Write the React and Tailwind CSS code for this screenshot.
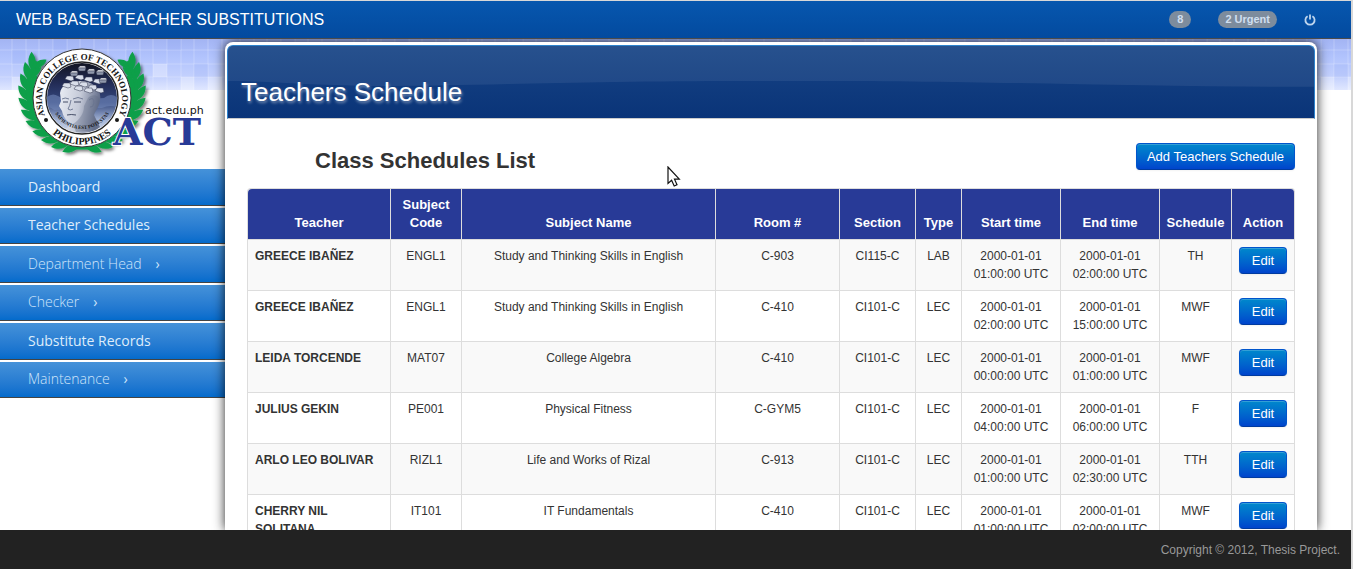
import React from "react";

const NAV = [
  { label: "Dashboard" },
  { label: "Teacher Schedules" },
  { label: "Department Head", sub: true },
  { label: "Checker", sub: true },
  { label: "Substitute Records" },
  { label: "Maintenance", sub: true },
];

const COLS = [
  ["Teacher", "w-[143px]"],
  ["Subject Code", "w-[71px]"],
  ["Subject Name", ""],
  ["Room #", "w-[124px]"],
  ["Section", "w-[76px]"],
  ["Type", "w-[46px]"],
  ["Start time", "w-[99px]"],
  ["End time", "w-[99px]"],
  ["Schedule", "w-[72px]"],
  ["Action", "w-[63px]"],
];

const ROWS = [
  ["GREECE IBAÑEZ", "ENGL1", "Study and Thinking Skills in English", "C-903", "CI115-C", "LAB", "2000-01-01 01:00:00 UTC", "2000-01-01 02:00:00 UTC", "TH"],
  ["GREECE IBAÑEZ", "ENGL1", "Study and Thinking Skills in English", "C-410", "CI101-C", "LEC", "2000-01-01 02:00:00 UTC", "2000-01-01 15:00:00 UTC", "MWF"],
  ["LEIDA TORCENDE", "MAT07", "College Algebra", "C-410", "CI101-C", "LEC", "2000-01-01 00:00:00 UTC", "2000-01-01 01:00:00 UTC", "MWF"],
  ["JULIUS GEKIN", "PE001", "Physical Fitness", "C-GYM5", "CI101-C", "LEC", "2000-01-01 04:00:00 UTC", "2000-01-01 06:00:00 UTC", "F"],
  ["ARLO LEO BOLIVAR", "RIZL1", "Life and Works of Rizal", "C-913", "CI101-C", "LEC", "2000-01-01 01:00:00 UTC", "2000-01-01 02:30:00 UTC", "TTH"],
  ["CHERRY NIL SOLITANA", "IT101", "IT Fundamentals", "C-410", "CI101-C", "LEC", "2000-01-01 01:00:00 UTC", "2000-01-01 02:00:00 UTC", "MWF"],
];

const BLUE_BUTTON =
  "rounded border border-[#0055cc] border-b-[#003ba0] bg-linear-to-b from-[#0088cc] to-[#0044cc] text-[13px] leading-[17px] text-white shadow-[inset_0_1px_0_rgba(255,255,255,0.2),0_1px_2px_rgba(0,0,0,0.05)]";

/* Leaf positions along both sides of the laurel wreath, in degrees. */
const LEAVES = [8, 19, 30, 41, 52, 63, 74, 85, 96, 107, 118];

function Logo() {
  return (
    <svg viewBox="0 0 196 110" className="block h-[110px] w-[196px]" role="img" aria-label="Asian College of Technology">
      <defs>
        <path id="ring-top" d="M32.4 70 A40 40 0 1 1 103.6 70" />
        <path id="ring-bottom" d="M23 60 A46 46 0 0 0 113 60" />
        <path id="motto" d="M39 61 A31 31 0 0 0 97 61" />
        <linearGradient id="sky" x1="0" y1="0" x2="0" y2="1">
          <stop offset="0" stopColor="#11131f" />
          <stop offset="0.3" stopColor="#232d58" />
          <stop offset="0.55" stopColor="#35497f" />
          <stop offset="0.8" stopColor="#a9b9d9" />
          <stop offset="1" stopColor="#d3dbea" />
        </linearGradient>
        <linearGradient id="face" x1="0" y1="0" x2="1" y2="0.2">
          <stop offset="0" stopColor="#eceff6" />
          <stop offset="0.55" stopColor="#c5cad8" />
          <stop offset="1" stopColor="#66708c" />
        </linearGradient>
        <clipPath id="disc"><circle cx="68" cy="50" r="35" /></clipPath>
        <filter id="logo-shadow" x="-10%" y="-10%" width="125%" height="125%">
          <feDropShadow dx="2" dy="2" stdDeviation="1.5" floodColor="#000" floodOpacity="0.5" />
        </filter>
      </defs>
      <g filter="url(#logo-shadow)">
        <g fill="#0c9f48">
          {[1, -1].map((side) =>
            LEAVES.map((a) => (
              <g key={side + "-" + a} transform={`translate(68 43) scale(${side} 1) rotate(${a})`}>
                <path d="M5 54 C3 60 -3 64 -11 63 C-8 56 -3 52 5 54 Z" />
                <path d="M5 54 C-1 47 -6 45 -11 46 C-9 52 -4 56 5 54 Z" />
                <path d="M7 52 L-5 53 L-5 56 L7 56 Z" />
              </g>
            ))
          )}
          <path d="M56 97 H80 V101 Q68 102 56 101 Z" />
        </g>
        <circle cx="68" cy="50" r="49" fill="#fff" stroke="#333" strokeWidth="1" />
      </g>
      <circle cx="68" cy="50" r="36" fill="#fff" stroke="#222" strokeWidth="1.4" />
      <g clipPath="url(#disc)">
        <rect x="30" y="14" width="76" height="74" fill="url(#sky)" />
        <path d="M32 50 Q38 44 44 48 T58 52 L90 50 Q97 44 104 50 V60 Q97 56 88 60 L40 62 Q36 58 32 60 Z" fill="#6f86b8" opacity="0.6" />
        <path d="M46 45 C47 37 56 33 66 33 C80 33 88 42 86 52 C85 60 81 62 80 67 L86 79 C76 87 58 87 50 82 L58 76 C52 73 49 68 48 63 L45 58 L47 53 Z" fill="url(#face)" />
        <path d="M70 58 C70 66 65 72 59 76 L62 84 L84 82 L80 67 C82 62 85 60 86 52 C84 46 78 46 74 50 Z" fill="#5f6985" opacity="0.35" />
        <path d="M48 51 Q51 49 55 51 M59 51 Q64 48 69 51 M57 52 Q56 58 54 61 Q56 63 59 61 M75 52 Q80 48 80 55 Q79 60 76 59" fill="none" stroke="#6a748f" strokeWidth="0.9" />
        <path d="M49 54 L54 54 M60 54 L67 54 M53 67 Q57 66 62 67" stroke="#444d66" strokeWidth="1" fill="none" />
        <g stroke="#30374f" strokeWidth="0.5">
          {[[48, 38], [56, 36], [65, 37], [74, 40], [81, 43], [60, 41], [70, 43], [51, 31], [61, 30], [70, 32], [79, 34]].map(([x, y]) => (
            <path key={x + "-" + y} fill="#d9deea" d={`M${x} ${y} l2 -3 l6 0 l1 4 l-3 1 z`} />
          ))}
          {[[64, 20], [73, 23], [82, 24], [56, 25], [85, 32]].map(([x, y]) => (
            <g key={x + "-" + y}>
              <path fill="#f6f7fa" d={`M${x} ${y} l2 -2 h5 l1 2 z`} />
              <path fill="#8f97ab" d={`M${x} ${y} h8 l-1 3 h-6 z`} />
            </g>
          ))}
        </g>
      </g>
      <g fontFamily="'Liberation Serif', serif" fontWeight="700" fill="#161616">
        <text fontSize="9" textAnchor="middle"><textPath href="#ring-top" startOffset="50%">ASIAN COLLEGE OF TECHNOLOGY</textPath></text>
        <text fontSize="10" textAnchor="middle"><textPath href="#ring-bottom" startOffset="50%">PHILIPPINES</textPath></text>
        <text fontSize="5" textAnchor="middle"><textPath href="#motto" startOffset="50%">SAPIENTIA EST POTESTAS</textPath></text>
        <circle cx="32" cy="72" r="2" />
        <circle cx="103" cy="72" r="2" />
      </g>
      <text x="131" y="66" fontFamily="'DejaVu Sans', sans-serif" fontSize="11" fill="#111">act.edu.ph</text>
      <text x="99" y="97" fontFamily="'DejaVu Serif', serif" fontWeight="700" fontSize="38" fill="#283a97" stroke="#fff" strokeWidth="2" paintOrder="stroke">ACT</text>
    </svg>
  );
}

function TileBand() {
  return (
    <svg className="absolute inset-x-0 top-0 h-[51px] w-full" aria-hidden="true">
      <defs>
        <linearGradient id="band" x1="0" y1="0" x2="0" y2="1">
          <stop offset="0" stopColor="#a3b4f3" />
          <stop offset="0.35" stopColor="#b1c3fd" />
          <stop offset="0.75" stopColor="#c4d1fd" />
          <stop offset="1" stopColor="#e0e7ff" />
        </linearGradient>
        <pattern id="tiles" width="114" height="51" patternUnits="userSpaceOnUse">
          <path d="M0 11H114M0 25H114M0 38H114M12 0V51M26 0V51M39 0V51M53 0V51M67 0V51M80 0V51M94 0V51M108 0V51" stroke="#fff" strokeOpacity="0.22" fill="none" />
          <path d="M12 11h14v14h-14zM53 0h14v11h-14zM80 25h14v13h-14z" fill="#7e98ee" fillOpacity="0.15" />
          <path d="M39 25h14v13h-14zM94 38h14v13h-14zM12 38h14v13h-14zM67 38h13v13h-13z" fill="#fff" fillOpacity="0.3" />
        </pattern>
      </defs>
      <rect width="100%" height="100%" fill="url(#band)" />
      <rect width="100%" height="100%" fill="url(#tiles)" />
    </svg>
  );
}

export default function App() {
  return (
    <div className="flex h-screen flex-col overflow-hidden border-t border-r-2 border-[#d8d8d8] bg-white font-['Liberation_Sans',Arial,sans-serif] text-[12px] leading-[18px] text-[#333]">
      <header className="relative z-20 flex h-[38px] shrink-0 items-center border-b border-[#4b4b4b] bg-linear-to-b from-[#0757ae] to-[#034a9f] pr-[35px] pl-4">
        <h1 className="text-base text-white">WEB BASED TEACHER SUBSTITUTIONS</h1>
        <nav className="ml-auto flex items-center gap-[27px] text-[11px] leading-[17px] font-bold text-[#d0dff0]" aria-label="Notifications">
          <a href="#pending" className="rounded-full bg-[#7d8c9d] px-2">8</a>
          <a href="#urgent" className="rounded-full bg-[#7d8c9d] px-[7px]">2 Urgent</a>
          <a href="#logout" aria-label="Log out">
            <svg viewBox="0 0 12 12" className="size-3" fill="none" stroke="#bed5ee" strokeWidth="1.8">
              <path d="M3.6 2.2 A4.6 4.6 0 1 0 8.4 2.2 M6 0.5 V5.5" />
            </svg>
          </a>
        </nav>
      </header>

      <div className="relative flex min-h-0 flex-1">
        <TileBand />
        <aside className="relative w-[225px] shrink-0">
          <div className="h-[130px] pt-[9px] pl-[14px]"><Logo /></div>
          <nav className="flex h-[229px] flex-col gap-[2px]" aria-label="Main">
            {NAV.map((n) => (
              <a
                key={n.label}
                href="#menu"
                className={
                  "flex flex-1 items-center border-b border-[#444] bg-linear-to-b from-[#4592d9] to-[#036bcc] pl-7 font-['Open_Sans',sans-serif] text-sm " +
                  (n.sub ? "font-light text-[#cfe5fa]" : "text-[#deedfb]")
                }
              >
                {n.label}
                {n.sub && <span className="ml-[14px] font-normal">›</span>}
              </a>
            ))}
          </nav>
        </aside>

        <main className="relative mt-[3px] mr-[34px] min-w-0 flex-1 rounded-t-lg bg-white px-[2px] pt-[3px] shadow-[0_0_12px_rgba(0,0,0,0.85)]">
          <div className="relative flex h-[74px] items-end overflow-hidden rounded-t-md border-x border-t border-b border-[#2d83cc] border-b-[#ccc] bg-linear-to-b from-[#174486] to-[#0a3478] px-[13px] pb-2">
            <svg className="absolute inset-0 h-full w-full" viewBox="0 0 1089 74" preserveAspectRatio="none" aria-hidden="true">
              <path d="M0 0 H1089 V42 C900 42 760 35 520 36 C350 36 240 41 150 41 C90 41 40 36 0 36 Z" fill="#fff" fillOpacity="0.07" />
            </svg>
            <h2 className="relative text-[26px] leading-[36px] text-white [text-shadow:1px_2px_3px_rgba(255,255,255,0.45)]">Teachers Schedule</h2>
          </div>

          <div className="px-5 pt-6">
            <div className="flex items-start pl-[68px]">
              <h3 className="text-[22px] leading-[36px] font-bold">Class Schedules List</h3>
              <button type="button" className={"ml-auto px-[10px] py-1 " + BLUE_BUTTON}>Add Teachers Schedule</button>
            </div>
            <table className="mt-[9px] w-full table-fixed border-separate border-spacing-0 rounded border-t border-l border-[#ddd]">
              <thead>
                <tr className="text-[13px] text-white">
                  {COLS.map(([name, width]) => (
                    <th key={name} scope="col" className={"border-r border-[#ddd] bg-[#283a97] px-[6px] pt-[7px] pb-[7px] align-bottom font-bold first:rounded-tl last:rounded-tr " + width}>{name}</th>
                  ))}
                </tr>
              </thead>
              <tbody>
                {ROWS.map((row, r) => (
                  <tr key={r} className="odd:bg-[#f9f9f9]">
                    {row.map((cell, c) =>
                      c === 0 ? (
                        <th key={c} scope="row" className="border-t border-r border-[#ddd] p-[7px] text-left align-top font-bold">{cell}</th>
                      ) : (
                        <td key={c} className="border-t border-r border-[#ddd] p-[7px] text-center align-top">{cell}</td>
                      )
                    )}
                    <td className="border-t border-r border-[#ddd] p-[7px] text-center align-top">
                      <button type="button" className={"block w-full py-1 " + BLUE_BUTTON}>Edit</button>
                    </td>
                  </tr>
                ))}
              </tbody>
            </table>
          </div>
          <svg className="absolute top-[124px] left-[442px] h-[22px] w-[14px]" viewBox="0 0 14 22" aria-hidden="true">
            <path d="M1 1 V17.5 L4.6 14.3 L7.2 20 L10 18.7 L7.5 13.2 H12.3 Z" fill="#fff" stroke="#111" strokeWidth="1.2" />
          </svg>
        </main>
      </div>

      <footer className="relative z-20 flex h-[39px] shrink-0 items-center justify-end bg-[#222] pr-[11px] text-[#999]">Copyright © 2012, Thesis Project.</footer>
    </div>
  );
}
